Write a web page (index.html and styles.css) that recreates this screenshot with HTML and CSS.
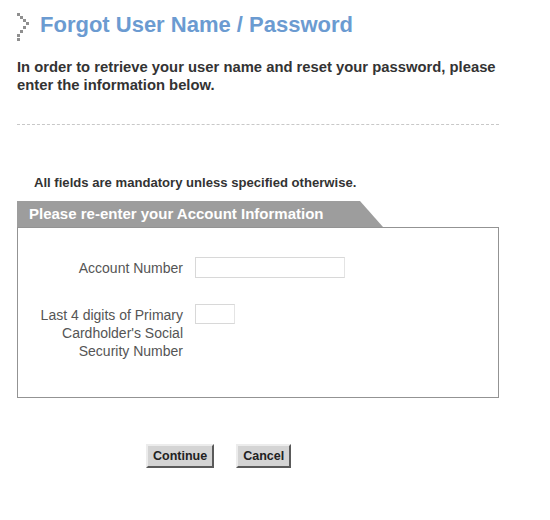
FILE: index.html
```html
<!DOCTYPE html>
<html lang="en">
<head>
    <meta charset="UTF-8">
    <meta name="viewport" content="width=device-width, initial-scale=1.0">
    <title>Forgot User Name / Password</title>
    <link rel="stylesheet" href="styles.css">
</head>
<body>
    <div class="page">
        <div class="header">
            <svg class="chevron" width="16" height="30" viewBox="0 0 16 30">
                <rect x="1" y="1" width="3" height="3"/>
                <rect x="4" y="4" width="3" height="3"/>
                <rect x="7" y="7" width="3" height="3"/>
                <rect x="10" y="10" width="3" height="3"/>
                <rect x="7" y="14" width="3" height="3"/>
                <rect x="4" y="18" width="3" height="3"/>
                <rect x="1" y="22" width="3" height="3"/>
                <rect x="1" y="26" width="3" height="3"/>
            </svg>
            <h1 class="title">Forgot User Name / Password</h1>
        </div>

        <p class="intro">In order to retrieve your user name and reset your password, please enter the information below.</p>

        <hr class="divider">

        <p class="mandatory">All fields are mandatory unless specified otherwise.</p>

        <div class="tab">Please re-enter your Account Information</div>
        <form class="account-box">
            <div class="field">
                <label for="account">Account Number</label>
                <input type="text" id="account" class="input-long">
            </div>
            <div class="field field-top">
                <label for="ssn">Last 4 digits of Primary Cardholder's Social Security Number</label>
                <input type="text" id="ssn" class="input-short" maxlength="4">
            </div>
        </form>

        <div class="button-row">
            <button type="button" class="btn">Continue</button>
            <button type="button" class="btn">Cancel</button>
        </div>
    </div>
</body>
</html>
```

FILE: styles.css
```css
body {
    margin: 0;
    font-family: "Liberation Sans", Arial, Helvetica, sans-serif;
    background-color: #fff;
}
.page {
    width: 482px;
    padding-left: 17px;
}
.header {
    display: flex;
    align-items: center;
    margin-top: 11px;
    height: 28px;
}
.chevron {
    fill: #8f8f8f;
    margin-left: -1px;
    margin-right: 8px;
    margin-top: 4px;
}
.title {
    margin: 0;
    font-size: 22px;
    line-height: 28px;
    font-weight: bold;
    color: #6b9bd1;
}
.intro {
    width: 495px;
    margin: 19px 0 0 0;
    font-size: 14.8px;
    line-height: 18px;
    font-weight: bold;
    color: #333;
}
.divider {
    margin: 30px 0 0 0;
    border: none;
    border-top: 1px dashed #c8c8c8;
    height: 0;
}
.mandatory {
    margin: 50px 0 0 17px;
    font-size: 13.1px;
    line-height: 16px;
    font-weight: bold;
    color: #333;
}
.tab {
    margin-top: 10px;
    width: 354px;
    height: 26px;
    line-height: 26px;
    padding-left: 12px;
    background-color: #9d9d9d;
    color: #fff;
    font-size: 15px;
    font-weight: bold;
    clip-path: polygon(0 0, calc(100% - 23px) 0, 100% 100%, 0 100%);
}
.account-box {
    border: 1px solid #939393;
    height: 171px;
    box-sizing: border-box;
    padding: 29px 0 0 20px;
    margin: 0;
}
.field {
    display: grid;
    grid-template-columns: 145px auto;
    column-gap: 12px;
    align-items: center;
    justify-items: start;
}
.field-top {
    align-items: start;
    margin-top: 26px;
}
.field label {
    justify-self: end;
    text-align: right;
    font-size: 14px;
    line-height: 18px;
    color: #555;
}
.field-top label {
    padding-top: 2px;
}
.input-long, .input-short {
    box-sizing: border-box;
    border: 1px solid #d8d8d8;
    border-right-color: #e4e4e4;
    background: #fff;
    padding: 0 3px;
    margin: 0;
    outline: none;
}
.input-long {
    width: 150px;
    height: 21px;
}
.input-short {
    width: 40px;
    height: 20px;
}
.button-row {
    display: flex;
    gap: 22px;
    margin: 46px 0 0 129px;
}
.btn {
    height: 24px;
    padding: 0 5px;
    font-family: "Liberation Sans", Arial, sans-serif;
    font-size: 12.5px;
    font-weight: bold;
    color: #222;
    background-color: #d4d4d4;
    border: 2px solid;
    border-color: #ececec #5a5a5a #5a5a5a #ececec;
    border-radius: 0;
}
```
